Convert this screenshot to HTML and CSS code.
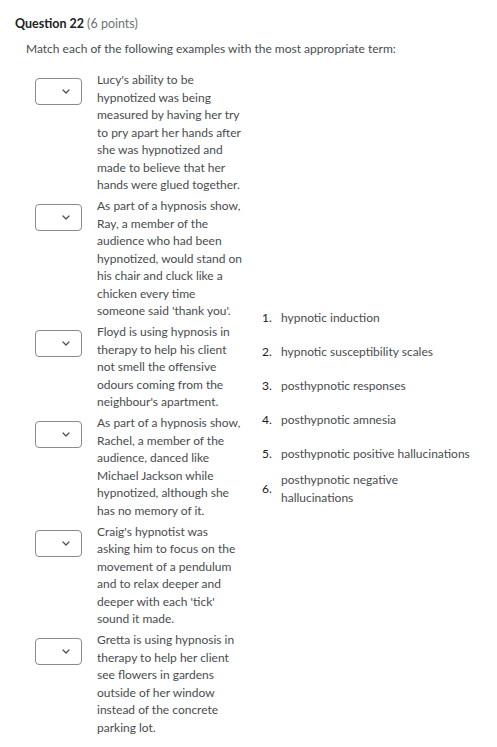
FILE: index.html
```html
<!DOCTYPE html>
<html>
<head>
<meta charset="utf-8">
<link rel="stylesheet" href="styles.css">
</head>
<body>
<div class="question">
  <h2 class="q-title">Question 22 <span class="q-points">(6 points)</span></h2>
  <p class="q-text">Match each of the following examples with the most appropriate term:</p>
  <div class="match">
    <div class="left">
      <div class="row">
        <div class="sel"><svg width="8" height="5" viewBox="0 0 8 5"><path d="M1 1 L4 4 L7 1" fill="none" stroke="#494c4e" stroke-width="1.2" stroke-linecap="round" stroke-linejoin="round"/></svg></div>
        <div class="stem">Lucy's ability to be hypnotized was being measured by having her try to pry apart her hands after she was hypnotized and made to believe that her hands were glued together.</div>
      </div>
      <div class="row">
        <div class="sel"><svg width="8" height="5" viewBox="0 0 8 5"><path d="M1 1 L4 4 L7 1" fill="none" stroke="#494c4e" stroke-width="1.2" stroke-linecap="round" stroke-linejoin="round"/></svg></div>
        <div class="stem">As part of a hypnosis show, Ray, a member of the audience who had been hypnotized, would stand on his chair and cluck like a chicken every time someone said 'thank you'.</div>
      </div>
      <div class="row">
        <div class="sel"><svg width="8" height="5" viewBox="0 0 8 5"><path d="M1 1 L4 4 L7 1" fill="none" stroke="#494c4e" stroke-width="1.2" stroke-linecap="round" stroke-linejoin="round"/></svg></div>
        <div class="stem">Floyd is using hypnosis in therapy to help his client not smell the offensive odours coming from the neighbour's apartment.</div>
      </div>
      <div class="row">
        <div class="sel"><svg width="8" height="5" viewBox="0 0 8 5"><path d="M1 1 L4 4 L7 1" fill="none" stroke="#494c4e" stroke-width="1.2" stroke-linecap="round" stroke-linejoin="round"/></svg></div>
        <div class="stem">As part of a hypnosis show, Rachel, a member of the audience, danced like Michael Jackson while hypnotized, although she has no memory of it.</div>
      </div>
      <div class="row">
        <div class="sel"><svg width="8" height="5" viewBox="0 0 8 5"><path d="M1 1 L4 4 L7 1" fill="none" stroke="#494c4e" stroke-width="1.2" stroke-linecap="round" stroke-linejoin="round"/></svg></div>
        <div class="stem">Craig's hypnotist was asking him to focus on the movement of a pendulum and to relax deeper and deeper with each 'tick' sound it made.</div>
      </div>
      <div class="row">
        <div class="sel"><svg width="8" height="5" viewBox="0 0 8 5"><path d="M1 1 L4 4 L7 1" fill="none" stroke="#494c4e" stroke-width="1.2" stroke-linecap="round" stroke-linejoin="round"/></svg></div>
        <div class="stem">Gretta is using hypnosis in therapy to help her client see flowers in gardens outside of her window instead of the concrete parking lot.</div>
      </div>
    </div>
    <ol class="right">
      <li class="choice"><span class="num">1.</span><span class="term">hypnotic induction</span></li>
      <li class="choice"><span class="num">2.</span><span class="term">hypnotic susceptibility scales</span></li>
      <li class="choice"><span class="num">3.</span><span class="term">posthypnotic responses</span></li>
      <li class="choice"><span class="num">4.</span><span class="term">posthypnotic amnesia</span></li>
      <li class="choice"><span class="num">5.</span><span class="term">posthypnotic positive hallucinations</span></li>
      <li class="choice"><span class="num">6.</span><span class="term">posthypnotic negative hallucinations</span></li>
    </ol>
  </div>
</div>
</body>
</html>
```

FILE: styles.css
```css
html, body {
  margin: 0;
  padding: 0;
  background: #ffffff;
}
body {
  font-family: Lato, "Noto Sans", sans-serif;
  font-size: 12px;
  line-height: 17.5px;
  color: #494c4e;
}
.question {
  padding: 15px 0 0 15px;
}
.q-title {
  margin: 0;
  font-size: 12.5px;
  line-height: 18px;
  font-weight: 700;
  color: #202122;
}
.q-points {
  font-weight: 400;
  color: #6e7376;
}
.q-text {
  margin: 7px 0 0 11px;
  line-height: 18px;
}
.match {
  display: flex;
  align-items: center;
  margin-top: 13px;
  padding-left: 20px;
}
.left {
  display: flex;
  flex-direction: column;
  gap: 3.5px;
}
.row {
  display: flex;
  align-items: flex-start;
  gap: 15px;
}
.sel {
  box-sizing: border-box;
  width: 47px;
  height: 27px;
  margin-top: 7px;
  border: 1px solid #868c8f;
  border-radius: 4px;
  display: flex;
  align-items: center;
  justify-content: flex-end;
  padding-right: 11px;
  flex: none;
}
.sel svg {
  display: block;
}
.stem {
  width: 146px;
}
.right {
  list-style: none;
  margin: 0 0 0 19px;
  padding: 0;
  width: 215px;
}
.choice {
  display: flex;
  align-items: center;
  min-height: 34px;
}
.num {
  width: 19px;
  flex: none;
  color: #202122;
}
.term {
  width: 192px;
}
```
